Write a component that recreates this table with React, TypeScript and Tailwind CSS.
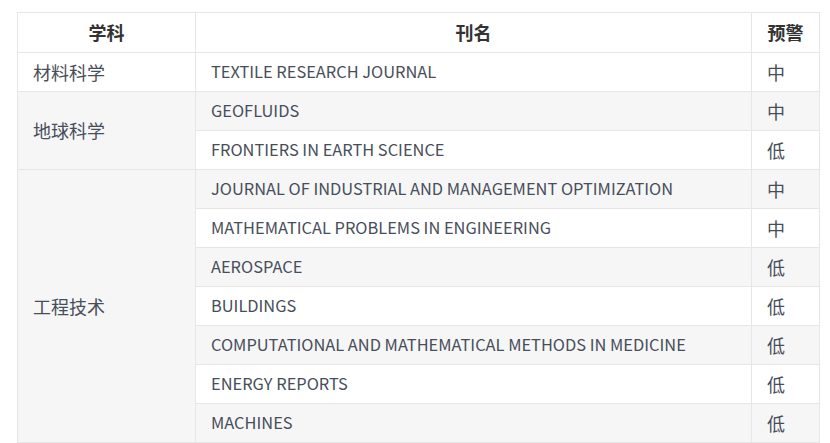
const rows = [
  { subject: "材料科学", span: 1, journal: "TEXTILE RESEARCH JOURNAL", level: "中" },
  { subject: "地球科学", span: 2, journal: "GEOFLUIDS", level: "中" },
  { subject: "", span: 0, journal: "FRONTIERS IN EARTH SCIENCE", level: "低" },
  { subject: "工程技术", span: 7, journal: "JOURNAL OF INDUSTRIAL AND MANAGEMENT OPTIMIZATION", level: "中" },
  { subject: "", span: 0, journal: "MATHEMATICAL PROBLEMS IN ENGINEERING", level: "中" },
  { subject: "", span: 0, journal: "AEROSPACE", level: "低" },
  { subject: "", span: 0, journal: "BUILDINGS", level: "低" },
  { subject: "", span: 0, journal: "COMPUTATIONAL AND MATHEMATICAL METHODS IN MEDICINE", level: "低" },
  { subject: "", span: 0, journal: "ENERGY REPORTS", level: "低" },
  { subject: "", span: 0, journal: "MACHINES", level: "低" },
]

const App = () => {
  return (
    <div className="w-[830px] h-[443px] bg-white pl-[17px] pt-[12px] overflow-hidden font-['Noto_Sans_CJK_SC','Noto_Sans',sans-serif] text-[18px] text-[#474e5a]">
      <table className="border-collapse table-fixed w-[802px]">
        <colgroup>
          <col className="w-[178px]" />
          <col className="w-[556px]" />
          <col className="w-[68px]" />
        </colgroup>
        <thead>
          <tr className="h-[40px]">
            <th className="border border-[#e6e6e6] font-bold text-[#333] text-center">学科</th>
            <th className="border border-[#e6e6e6] font-bold text-[#333] text-center">刊名</th>
            <th className="border border-[#e6e6e6] font-bold text-[#333] text-center">预警</th>
          </tr>
        </thead>
        <tbody>
          {rows.map((row, i) => (
            <tr key={i} className={`h-[39px] ${i % 2 === 1 ? "bg-[#f6f6f6]" : "bg-white"}`}>
              {row.span > 0 && (
                <td rowSpan={row.span} className="border border-[#e6e6e6] pl-[15px] pr-4 align-middle">{row.subject}</td>
              )}
              <td className="border border-[#e6e6e6] pl-[15px] pr-4 pb-px text-[16.4px]">{row.journal}</td>
              <td className="border border-[#e6e6e6] pl-[15px] pr-2">{row.level}</td>
            </tr>
          ))}
        </tbody>
      </table>
    </div>
  )
}

export default App
